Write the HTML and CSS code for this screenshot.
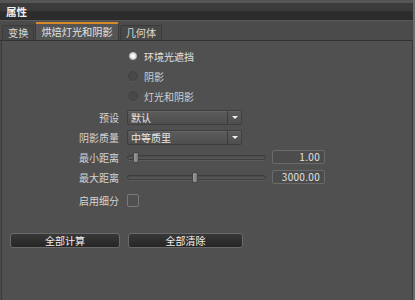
FILE: index.html
```html
<!DOCTYPE html>
<html>
<head>
<meta charset="utf-8">
<link rel="stylesheet" href="styles.css">
</head>
<body>
<div class="window">
  <div class="titlebar"><span class="title">属性</span></div>
  <div class="tabbar">
    <div class="tab">变换</div>
    <div class="tab active">烘焙灯光和阴影</div>
    <div class="tab">几何体</div>
  </div>
  <div class="content">
    <div class="radios">
      <div class="radio-row sel"><span class="radio on"></span><span>环境光遮挡</span></div>
      <div class="radio-row"><span class="radio"></span><span>阴影</span></div>
      <div class="radio-row"><span class="radio"></span><span>灯光和阴影</span></div>
    </div>
    <div class="form">
      <div class="label r1">预设</div>
      <div class="ctrl r1"><div class="select"><span class="sel-text">默认</span><span class="sel-btn"><span class="arrow"></span></span></div></div>
      <div class="label r2">阴影质量</div>
      <div class="ctrl r2"><div class="select"><span class="sel-text">中等质里</span><span class="sel-btn"><span class="arrow"></span></span></div></div>
      <div class="label r3">最小距离</div>
      <div class="ctrl r3"><div class="slider"><div class="track"></div><div class="thumb t-min"></div></div><div class="num">1.00</div></div>
      <div class="label r4">最大距离</div>
      <div class="ctrl r4"><div class="slider"><div class="track"></div><div class="thumb t-max"></div></div><div class="num">3000.00</div></div>
      <div class="label r5">启用细分</div>
      <div class="ctrl r5"><span class="check"></span></div>
    </div>
    <div class="buttons">
      <button class="btn b1">全部计算</button>
      <button class="btn b2">全部清除</button>
    </div>
  </div>
</div>
</body>
</html>
```
FILE: styles.css
```css
* { box-sizing: border-box; }
html, body { margin: 0; padding: 0; }
body {
  width: 415px;
  height: 300px;
  overflow: hidden;
  background: #4e4e4e;
  font-family: "Noto Sans CJK SC", "Noto Sans", sans-serif;
  font-size: 10px;
  color: #d6d6d6;
}
.window {
  width: 415px;
  height: 300px;
  display: flex;
  flex-direction: column;
  border-right: 2px solid #6a6a6a;
  background: #4c4c4c;
}
.titlebar {
  height: 21px;
  flex: none;
  border-top: 3px solid #555;
  background: linear-gradient(#3c3c3c 0, #3a3a3a 8px, #2d2d2d 8px, #2b2b2b 100%);
  border-bottom: 1px solid #5a5a5a;
  display: flex;
  align-items: center;
  padding-left: 6px;
}
.title {
  font-weight: bold;
  color: #f0f0f0;
  font-size: 10.5px;
  line-height: 10px;
}
.tabbar {
  height: 20px;
  flex: none;
  display: flex;
  align-items: flex-end;
  padding-left: 2px;
  gap: 1px;
  background: #4b4b4b;
  border-bottom: 1px solid #333;
}
.tab {
  height: 15px;
  padding: 0 5px;
  line-height: 14px;
  background: #474747;
  border: 1px solid #3a3a3a;
  border-bottom: none;
  border-radius: 2px 2px 0 0;
  color: #d8d8d8;
  font-size: 10.2px;
}
.tab.active {
  height: 18px;
  background: #555555;
  border-top: 2px solid #d88a2a;
  line-height: 15px;
  color: #e4e4e4;
}
.content {
  flex: 1;
  margin-left: 1px;
  border-left: 1px solid #3a3a3a;
  border-right: 1px solid #3a3a3a;
  background: #505050;
  padding-top: 5px;
  padding-left: 1px;
}
.radios {
  display: flex;
  flex-direction: column;
  padding-left: 125px;
}
.radio-row {
  height: 20px;
  display: flex;
  align-items: center;
  gap: 6px;
  color: #cfcfcf;
}
.radio-row.sel { color: #e2e2e2; }
.radio {
  width: 10px;
  height: 10px;
  border-radius: 50%;
  background: radial-gradient(circle, #4a4a4a 0, #484848 60%, #444 100%);
  border: 1px solid #424242;
  box-shadow: 0 1px 0 #575757;
}
.radio.on {
  background: radial-gradient(circle, #ffffff 0, #f4f4f4 35%, #a0a0a0 75%, #777 100%);
  border-color: #555;
}
.form {
  display: grid;
  grid-template-columns: 116px 1fr;
  column-gap: 8px;
  margin-top: 1px;
}
.label {
  display: flex;
  align-items: center;
  justify-content: flex-end;
  color: #d4d4d4;
}
.ctrl { display: flex; align-items: center; }
.r1, .r2, .r3, .r4 { height: 20px; }
.r5 { height: 24px; padding-top: 3px; }
.select {
  width: 115px;
  height: 15px;
  display: flex;
  border: 1px solid #3e3e3e;
  border-radius: 2px;
  background: linear-gradient(#5c5c5c, #4e4e4e);
  box-shadow: inset 0 1px 0 #666;
}
.sel-text {
  flex: 1;
  padding-left: 3px;
  line-height: 13px;
  color: #e8e8e8;
}
.sel-btn {
  width: 14px;
  border-left: 1px solid #3c3c3c;
  display: flex;
  align-items: center;
  justify-content: center;
}
.arrow {
  width: 0;
  height: 0;
  border-left: 3px solid transparent;
  border-right: 3px solid transparent;
  border-top: 3px solid #f0f0f0;
}
.slider {
  position: relative;
  width: 139px;
  height: 11px;
  display: flex;
  align-items: center;
}
.track {
  width: 100%;
  height: 5px;
  border-radius: 3px;
  border: 1px solid #3c3c3c;
  background: linear-gradient(#4a4a4a, #5a5a5a);
  box-shadow: 0 1px 0 #5c5c5c;
}
.thumb {
  position: absolute;
  top: 0;
  width: 6px;
  height: 11px;
  border-radius: 2px;
  background: linear-gradient(to right, #9a9a9a, #7c7c7c);
  border: 1px solid #444;
}
.t-min { left: 6px; }
.t-max { left: 65px; }
.num {
  margin-left: 6px;
  width: 53px;
  height: 14px;
  border: 1px solid #6a6a6a;
  border-radius: 2px;
  background: #4c4c4c;
  text-align: right;
  padding-right: 4px;
  line-height: 12px;
  color: #e2e2e2;
  letter-spacing: 0.3px;
}
.check {
  width: 12px;
  height: 13px;
  border: 1px solid #7a7a7a;
  border-radius: 2px;
}
.buttons {
  display: flex;
  gap: 8px;
  padding-left: 7px;
  margin-top: 22px;
}
.btn {
  height: 15px;
  padding: 0;
  font: inherit;
  color: #f0f0f0;
  border: 1px solid #6a6a6a;
  border-radius: 3px;
  background: linear-gradient(#383838, #262626);
  line-height: 12px;
}
.b1 { width: 110px; }
.b2 { width: 115px; }
```
